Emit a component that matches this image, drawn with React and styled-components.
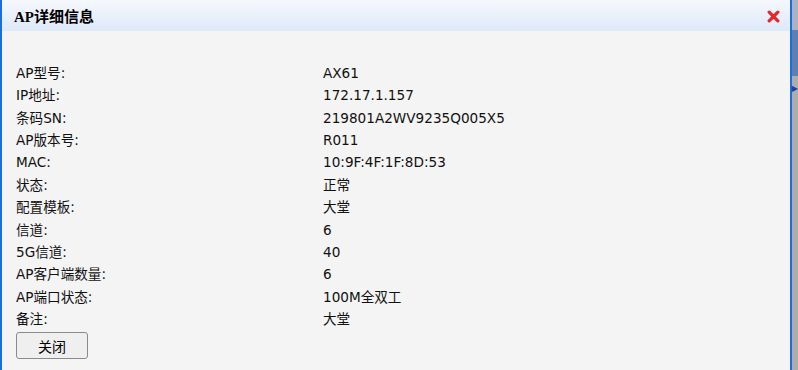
import styled, { createGlobalStyle } from "styled-components";

const GlobalStyle = createGlobalStyle`
  html, body {
    margin: 0;
    padding: 0;
    width: 798px;
    height: 370px;
    overflow: hidden;
    background: #adadad;
  }
`;

const rows = [
  ["AP型号:", "AX61"],
  ["IP地址:", "172.17.1.157"],
  ["条码SN:", "219801A2WV9235Q005X5"],
  ["AP版本号:", "R011"],
  ["MAC:", "10:9F:4F:1F:8D:53"],
  ["状态:", "正常"],
  ["配置模板:", "大堂"],
  ["信道:", "6"],
  ["5G信道:", "40"],
  ["AP客户端数量:", "6"],
  ["AP端口状态:", "100M全双工"],
  ["备注:", "大堂"],
];

export default function App() {
  return (
    <>
      <GlobalStyle />
      <Page>
        <Dialog>
          <Header>
            <Title>AP详细信息</Title>
            <CloseIcon viewBox="0 0 12 12" aria-label="close">
              <path d="M2 2 L10 10 M10 2 L2 10" stroke="#e8262a" strokeWidth="3" strokeLinecap="round" />
            </CloseIcon>
          </Header>
          <Body>
            <InfoTable>
              {rows.map(([k, v]) => (
                <Row key={k}>
                  <Label>{k}</Label>
                  <Value>{v}</Value>
                </Row>
              ))}
            </InfoTable>
            <Button>关闭</Button>
          </Body>
        </Dialog>
        <Backdrop>
          <div className="top" />
          <div className="bar" />
          <div className="arrow">▶</div>
          <div className="rest" />
        </Backdrop>
      </Page>
    </>
  );
}

const Page = styled.div`
  display: flex;
  width: 798px;
  height: 370px;
`;

const Dialog = styled.div`
  width: 789px;
  height: 370px;
  background: #f4f4f4;
  border-left: 2px solid #1a6fe0;
  border-right: 2px solid #1a6fe0;
  display: flex;
  flex-direction: column;
`;

const Header = styled.div`
  height: 31px;
  background: linear-gradient(to bottom, #f6f8fd, #dde9f9);
  display: flex;
  align-items: center;
  justify-content: space-between;
  padding: 0 10px 0 12px;
`;

const Title = styled.span`
  font-family: "Liberation Serif", "Noto Sans CJK SC", serif;
  font-weight: bold;
  font-size: 15px;
  color: #000;
`;

const CloseIcon = styled.svg`
  width: 13px;
  height: 13px;
  margin-top: 1px;
`;

const Body = styled.div`
  padding: 31px 14px 0 14px;
  font-family: "DejaVu Sans", "Noto Sans CJK SC", sans-serif;
  font-size: 13.6px;
  color: #111;
`;

const InfoTable = styled.div`
  display: flex;
  flex-direction: column;
`;

const Row = styled.div`
  display: flex;
  height: 22.36px;
  line-height: 22.36px;
  white-space: nowrap;
`;

const Label = styled.div`
  width: 307px;
`;

const Value = styled.div``;

const Button = styled.button`
  margin-top: 2px;
  width: 72px;
  height: 27px;
  background: #efefef;
  border: 1px solid #8a8a8a;
  border-radius: 3px;
  font-family: "DejaVu Sans", "Noto Sans CJK SC", sans-serif;
  font-size: 14px;
  color: #000;
  padding: 0;
`;

const Backdrop = styled.div`
  flex: 1;
  display: flex;
  flex-direction: column;
  background: #adadad;

  .top {
    height: 30px;
    background: #a9b3c3;
  }
  .bar {
    height: 46px;
    background: #5d7fb2;
  }
  .arrow {
    margin-top: 6px;
    height: 14px;
    font-size: 8px;
    line-height: 14px;
    color: #1c3f9e;
    font-family: "DejaVu Sans", sans-serif;
  }
  .rest {
    flex: 1;
  }
`;
